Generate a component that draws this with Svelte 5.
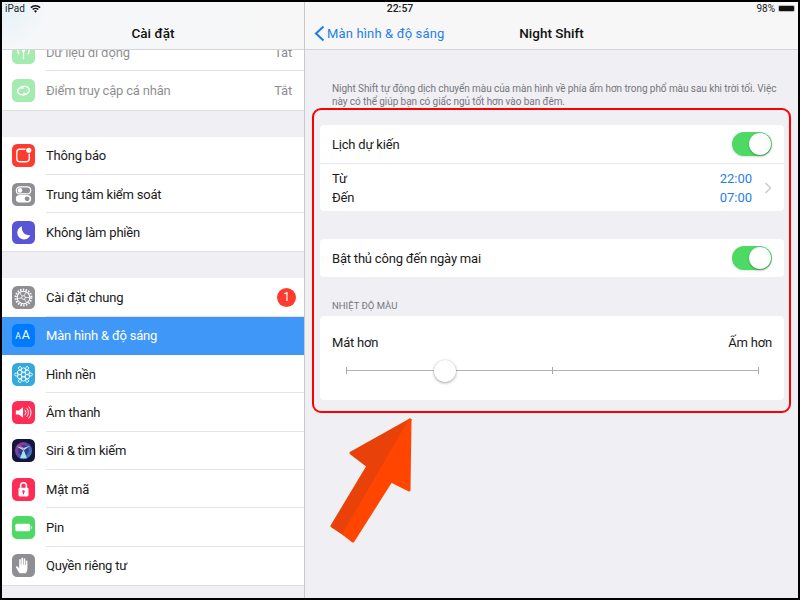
<script lang="ts">
  interface Row {
    icon: string;
    label: string;
    value?: string;
    badge?: string;
    selected?: boolean;
    faded?: boolean;
  }

  const groups: Row[][] = [
    [
      { icon: 'cellular', label: 'Dữ liệu di động', value: 'Tắt', faded: true },
      { icon: 'hotspot', label: 'Điểm truy cập cá nhân', value: 'Tắt', faded: true }
    ],
    [
      { icon: 'notify', label: 'Thông báo' },
      { icon: 'control', label: 'Trung tâm kiểm soát' },
      { icon: 'moon', label: 'Không làm phiền' }
    ],
    [
      { icon: 'gear', label: 'Cài đặt chung', badge: '1' },
      { icon: 'display', label: 'Màn hình & độ sáng', selected: true },
      { icon: 'wallpaper', label: 'Hình nền' },
      { icon: 'sound', label: 'Âm thanh' },
      { icon: 'siri', label: 'Siri & tìm kiếm' },
      { icon: 'lock', label: 'Mật mã' },
      { icon: 'battery', label: 'Pin' },
      { icon: 'hand', label: 'Quyền riêng tư' }
    ]
  ];

  const colors: Record<string, string> = {
    cellular: '#4cd964',
    hotspot: '#4cd964',
    notify: '#ff3b30',
    control: '#8e8e93',
    moon: '#5856d6',
    gear: '#8e8e93',
    display: '#007aff',
    wallpaper: '#34aadc',
    sound: '#ff2d55',
    siri: '#16163a',
    lock: '#ff2d55',
    battery: '#4cd964',
    hand: '#8e8e93'
  };

  const petals = [0, 60, 120, 180, 240, 300];
  let warmth = $state(24);
</script>

{#snippet icon(name: string)}
  <svg class="app-icon" viewBox="0 0 24 24">
    <defs>
      <linearGradient id="siri-ring" x1="0" y1="0" x2="1" y2="1">
        <stop offset="0" stop-color="#e0409a" />
        <stop offset="0.5" stop-color="#6a5be0" />
        <stop offset="1" stop-color="#35c6e8" />
      </linearGradient>
    </defs>
    <rect width="24" height="24" rx="5.5" fill={colors[name]} />
    {#if name === 'cellular'}
      <circle cx="12" cy="10" r="1.6" fill="#fff" />
      <path d="M12 10v9M7.5 6a7 7 0 0 0 0 8M16.5 6a7 7 0 0 1 0 8" stroke="#fff" stroke-width="1.4" fill="none" />
    {:else if name === 'hotspot'}
      <path d="M7.5 10c2.5-3.6 10-3 10.5 1.6.3 3-3 4.6-5.6 3.4M16.5 14.4c-2.5 3.4-10 3-10.5-1.6-.3-3 3-4.4 5.6-3.4" stroke="#fff" stroke-width="1.5" fill="none" stroke-linecap="round" />
    {:else if name === 'notify'}
      <rect x="5" y="5.5" width="13" height="13" rx="3" fill="none" stroke="#fff" stroke-width="1.4" />
      <circle cx="17.5" cy="6.5" r="3.6" fill="#ff3b30" />
      <circle cx="17.5" cy="6.5" r="2.7" fill="#fff" />
    {:else if name === 'control'}
      <rect x="4.5" y="4" width="15" height="7.4" rx="3.7" fill="none" stroke="#fff" stroke-width="1.2" />
      <circle cx="8.3" cy="7.7" r="2.4" fill="#fff" />
      <rect x="4" y="12.6" width="16" height="7.8" rx="3.9" fill="#fff" />
      <circle cx="15.8" cy="16.5" r="2.5" fill="#8e8e93" />
    {:else if name === 'moon'}
      <path d="M10.5 5.5a7 7 0 1 0 8.5 9.3 7.6 7.6 0 0 1-8.5-9.3z" fill="#fff" />
    {:else if name === 'gear'}
      <circle cx="12" cy="12" r="8.2" fill="none" stroke="#fff" stroke-width="2.2" stroke-dasharray="1.5 1.4" />
      <circle cx="12" cy="12" r="6.6" fill="none" stroke="#fff" stroke-width="1.1" />
      <circle cx="12" cy="12" r="1.9" fill="none" stroke="#fff" stroke-width="0.9" />
      <path d="M10.6 10.7 8 6.9M10.2 12.6 5.7 13M12.9 13.6l2.4 3.9M13.9 12h4.5M12.6 10.2l2-4" stroke="#fff" stroke-width="0.8" />
    {:else if name === 'display'}
      <text x="3.5" y="15.5" class="aa"><tspan font-size="9">A</tspan><tspan font-size="13" dx="1">A</tspan></text>
    {:else if name === 'wallpaper'}
      <g fill="none" stroke="#fff" stroke-width="0.9">
        <circle cx="12" cy="12" r="2.3" />
        {#each petals as angle}
          <circle cx="12" cy="7.4" r="2.3" transform="rotate({angle} 12 12)" />
          <circle cx="12" cy="4.4" r="1.6" transform="rotate({angle + 30} 12 12)" />
        {/each}
      </g>
    {:else if name === 'sound'}
      <path d="M4 10h3l4.5-3.5v11L7 14H4z" fill="#fff" />
      <path d="M13.6 9.5a3.5 3.5 0 0 1 0 5M15.6 7.8a6 6 0 0 1 0 8.4M17.6 6a8.6 8.6 0 0 1 0 12" stroke="#fff" stroke-width="1" fill="none" stroke-linecap="round" />
    {:else if name === 'siri'}
      <circle cx="12" cy="12" r="9" fill="url(#siri-ring)" opacity="0.75" />
      <circle cx="12" cy="12" r="5.5" fill="#2a2a5c" opacity="0.6" />
      <path d="M12 12 4.5 7.5 12 9.5l7-2.5zM12 10.5 8.5 20h7z" fill="#a6e2f2" />
      <path d="M12 11 6.5 6l5.5 3z" fill="#f06ab0" />
    {:else if name === 'lock'}
      <rect x="6.8" y="10.2" width="10.4" height="9" rx="1.4" fill="#fff" />
      <path d="M9 10.5V8a3 3 0 0 1 6 0v2.5" stroke="#fff" stroke-width="1.6" fill="none" />
      <circle cx="12" cy="14.2" r="1.3" fill="#ff2d55" />
      <rect x="11.4" y="14.5" width="1.2" height="2.4" fill="#ff2d55" />
    {:else if name === 'battery'}
      <rect x="3.5" y="8" width="15.5" height="8" rx="1.6" fill="#fff" />
      <rect x="19.8" y="10.6" width="1.2" height="2.8" rx="0.5" fill="#fff" opacity="0.8" />
    {:else if name === 'hand'}
      <path d="M8 20c-1.2-1.4-3-4.4-3.8-6-.5-1 .8-1.8 1.6-1l1.7 1.9V6.2c0-1.2 1.7-1.2 1.7 0V11h.6V4.6c0-1.2 1.8-1.2 1.8 0V11h.6V5.3c0-1.2 1.7-1.2 1.7 0V11.6h.6V7.5c0-1.1 1.6-1.1 1.6 0V15c0 2.2-.9 3.9-2 5z" fill="#fff" />
    {/if}
  </svg>
{/snippet}

{#snippet toggle()}
  <span class="toggle"><span class="knob"></span></span>
{/snippet}

<div class="screen">
  <div class="status">
    <span class="status-left">
      iPad
      <svg class="wifi" viewBox="0 0 16 12">
        <path d="M8 11.5 5.7 8.9a3.4 3.4 0 0 1 4.6 0zM4.5 7.6 3 6a7.2 7.2 0 0 1 10 0l-1.5 1.6a5 5 0 0 0-7 0zM1.8 4.7.3 3.1a11.4 11.4 0 0 1 15.4 0l-1.5 1.6a9.2 9.2 0 0 0-12.4 0z" fill="#111" />
      </svg>
    </span>
    <span class="clock">22:57</span>
    <span class="status-right">
      98%
      <span class="battery"><span class="battery-fill"></span></span>
    </span>
  </div>

  <aside class="sidebar">
    <header class="bar sidebar-bar"><h1>Cài đặt</h1></header>
    <div class="scroll">
      <div class="list">
        {#each groups as group}
          <ul class="group">
            {#each group as row}
              <li class="row" class:selected={row.selected} class:faded={row.faded}>
                {@render icon(row.icon)}
                <span class="label">{row.label}</span>
                {#if row.value}<span class="value">{row.value}</span>{/if}
                {#if row.badge}<span class="badge">{row.badge}</span>{/if}
              </li>
            {/each}
          </ul>
        {/each}
      </div>
    </div>
  </aside>

  <main class="detail">
    <header class="bar detail-bar">
      <span class="back">
        <svg class="back-chevron" viewBox="0 0 11 17">
          <path d="M9.5 1.5 2 8.5l7.5 7" fill="none" stroke="#1f7fe8" stroke-width="2.1" />
        </svg>
        Màn hình & độ sáng
      </span>
      <h1>Night Shift</h1>
    </header>

    <div class="content">
      <p class="note">Night Shift tự động dịch chuyển màu của màn hình về phía ấm hơn trong phổ màu sau khi trời tối. Việc này có thể giúp bạn có giấc ngủ tốt hơn vào ban đêm.</p>

      <section class="card">
        <div class="setting">
          <span>Lịch dự kiến</span>
          {@render toggle()}
        </div>
        <div class="setting schedule">
          <div class="times">
            <div class="time-row"><span>Từ</span><span class="time">22:00</span></div>
            <div class="time-row"><span>Đến</span><span class="time">07:00</span></div>
          </div>
          <svg class="chevron" viewBox="0 0 7 12">
            <path d="M1 1l5 5-5 5" fill="none" stroke="#c7c7cc" stroke-width="1.3" />
          </svg>
        </div>
      </section>

      <section class="card manual">
        <div class="setting">
          <span>Bật thủ công đến ngày mai</span>
          {@render toggle()}
        </div>
      </section>

      <h2 class="section-label">NHIỆT ĐỘ MÀU</h2>
      <section class="card temperature">
        <div class="ends"><span>Mát hơn</span><span>Ấm hơn</span></div>
        <div class="slider">
          <span class="tick"></span>
          <span class="tick"></span>
          <span class="tick"></span>
          <span class="thumb" style:left="{warmth}%"></span>
        </div>
      </section>
    </div>
  </main>

  <div class="highlight"></div>
  <svg class="arrow" viewBox="0 0 90 140">
    <g stroke-width="3" stroke-linejoin="round">
      <polygon points="85,8 26,41 43,54 7,114 19,122" fill="#e8410a" stroke="#e8410a" />
      <polygon points="85,8 19,122 28,129 66,69 84,78" fill="#ff4500" stroke="#ff4500" />
    </g>
  </svg>
</div>

<style>
  :global(body) {
    margin: 0;
    font-family: Roboto, "Noto Sans", sans-serif;
  }

  .screen {
    position: relative;
    display: flex;
    width: 800px;
    height: 600px;
    box-sizing: border-box;
    padding: 2px;
    background: #000;
    color: #1a1a1a;
    overflow: hidden;
    font-size: 13px;
    letter-spacing: -0.2px;
  }

  h1 {
    margin: 0;
    font-size: 13.5px;
    font-weight: 500;
    letter-spacing: 0;
    color: #111;
  }

  .status {
    position: absolute;
    top: 2px;
    left: 2px;
    right: 2px;
    z-index: 2;
    display: grid;
    grid-template-columns: 1fr auto 1fr;
    align-items: center;
    height: 13px;
    padding: 0 3px;
    font-size: 10px;
    letter-spacing: 0;
    color: #222;
  }

  .status-left {
    display: flex;
    align-items: center;
    gap: 5px;
  }

  .wifi {
    width: 11px;
    height: 8px;
  }

  .clock {
    font-weight: 500;
    font-size: 10.5px;
  }

  .status-right {
    display: flex;
    align-items: center;
    justify-content: flex-end;
    gap: 3px;
  }

  .battery {
    display: flex;
    width: 17px;
    height: 7px;
    padding: 1px;
    border-radius: 2px;
    background: #bbb;
    box-sizing: border-box;
  }

  .battery-fill {
    flex: 1;
    background: #111;
    border-radius: 1px;
  }

  .bar {
    flex: none;
    height: 48px;
    box-sizing: border-box;
    padding-top: 23px;
    border-bottom: 1px solid #d6d6da;
    background: #f7f7f8;
  }

  .sidebar {
    display: flex;
    flex-direction: column;
    flex: none;
    width: 303px;
    background: #efeff4;
    border-right: 1px solid #c8c8cc;
    box-sizing: border-box;
  }

  .sidebar-bar {
    text-align: center;
    background: radial-gradient(circle at 0 0, #e3f1f7 0, #f5f7f8 45px, #f7f7f8 100%);
  }

  .scroll {
    flex: 1;
    overflow: hidden;
  }

  .list {
    margin-top: -17px;
  }

  .group {
    list-style: none;
    margin: 0 0 26px;
    padding: 0;
    background: #fff;
    border-bottom: 1px solid #dedee2;
  }

  .row {
    position: relative;
    display: flex;
    align-items: center;
    height: 38.3px;
    padding: 0 10px;
    box-sizing: border-box;
  }

  .row::after {
    content: "";
    position: absolute;
    left: 44px;
    right: 0;
    bottom: 0;
    height: 1px;
    background: #e4e4e8;
  }

  .row:last-child::after {
    display: none;
  }

  .selected {
    background: #3f97f7;
    color: #fff;
  }

  .selected::after {
    display: none;
  }

  .faded .app-icon,
  .faded .label {
    opacity: 0.5;
  }

  .app-icon {
    flex: none;
    width: 23px;
    height: 23px;
    margin-right: 11px;
  }

  .aa {
    fill: #fff;
    font-family: Roboto, sans-serif;
  }

  .label {
    flex: 1;
  }

  .value {
    color: #8e8e93;
    margin-right: 2px;
  }

  .badge {
    width: 19px;
    height: 19px;
    margin-right: -2px;
    border-radius: 50%;
    background: #ff3b30;
    color: #fff;
    text-align: center;
    line-height: 19px;
    font-size: 12px;
  }

  .detail {
    flex: 1;
    display: flex;
    flex-direction: column;
    background: #efeff4;
  }

  .detail-bar {
    position: relative;
    text-align: center;
  }

  .back {
    position: absolute;
    left: 9px;
    top: 23px;
    display: flex;
    align-items: center;
    gap: 2px;
    letter-spacing: 0.15px;
    color: #1f7fe8;
  }

  .back-chevron {
    width: 11px;
    height: 17px;
  }

  .content {
    padding: 32px 14px 0 15px;
  }

  .note {
    margin: 0 2px 17px 12px;
    font-size: 10px;
    line-height: 13px;
    letter-spacing: -0.07px;
    color: #77777c;
  }

  .card {
    background: #fff;
    border-radius: 4px;
  }

  .manual {
    margin-top: 28px;
  }

  .setting {
    display: flex;
    align-items: center;
    justify-content: space-between;
    height: 38px;
    padding: 0 12px;
    box-sizing: border-box;
  }

  .schedule {
    height: 48px;
    padding-top: 1px;
    gap: 12px;
    border-top: 1px solid #e8e8ec;
  }

  .times {
    flex: 1;
    display: grid;
    gap: 1px;
  }

  .time-row {
    display: flex;
    justify-content: space-between;
    line-height: 18px;
  }

  .time {
    color: #1f7fe8;
    letter-spacing: 0;
  }

  .chevron {
    width: 8px;
    height: 12px;
  }

  .toggle {
    display: flex;
    justify-content: flex-end;
    width: 40px;
    height: 24px;
    border-radius: 12px;
    background: #4cd964;
    padding: 1px;
    box-sizing: border-box;
    box-shadow: 0 1px 2px rgba(0, 0, 0, 0.12);
  }

  .knob {
    width: 22px;
    height: 22px;
    border-radius: 50%;
    background: #fff;
    box-shadow: 0 1px 2px rgba(0, 0, 0, 0.3);
  }

  .section-label {
    margin: 23px 12px 5px;
    font-size: 9.5px;
    line-height: 11px;
    font-weight: 400;
    letter-spacing: 0;
    color: #77777c;
  }

  .temperature {
    height: 84px;
    padding: 18px 12px 0;
    box-sizing: border-box;
  }

  .ends {
    display: flex;
    justify-content: space-between;
    line-height: 18px;
  }

  .slider {
    position: relative;
    display: flex;
    justify-content: space-between;
    align-items: center;
    height: 7px;
    margin: 15px 13px 0 14px;
    background: linear-gradient(#b4b4b4, #b4b4b4) center / 100% 1px no-repeat;
  }

  .tick {
    width: 1px;
    height: 7px;
    background: #a8a8a8;
  }

  .thumb {
    position: absolute;
    top: 50%;
    width: 22px;
    height: 22px;
    border-radius: 50%;
    background: #fff;
    transform: translate(-50%, -50%);
    box-shadow: 0 1px 3px rgba(0, 0, 0, 0.35), 0 0 1px rgba(0, 0, 0, 0.2);
  }

  .highlight {
    position: absolute;
    left: 312px;
    top: 108px;
    width: 479px;
    height: 305px;
    box-sizing: border-box;
    border: 2px solid #f00;
    border-radius: 9px;
  }

  .arrow {
    position: absolute;
    left: 325px;
    top: 412px;
    width: 90px;
    height: 140px;
  }
</style>
